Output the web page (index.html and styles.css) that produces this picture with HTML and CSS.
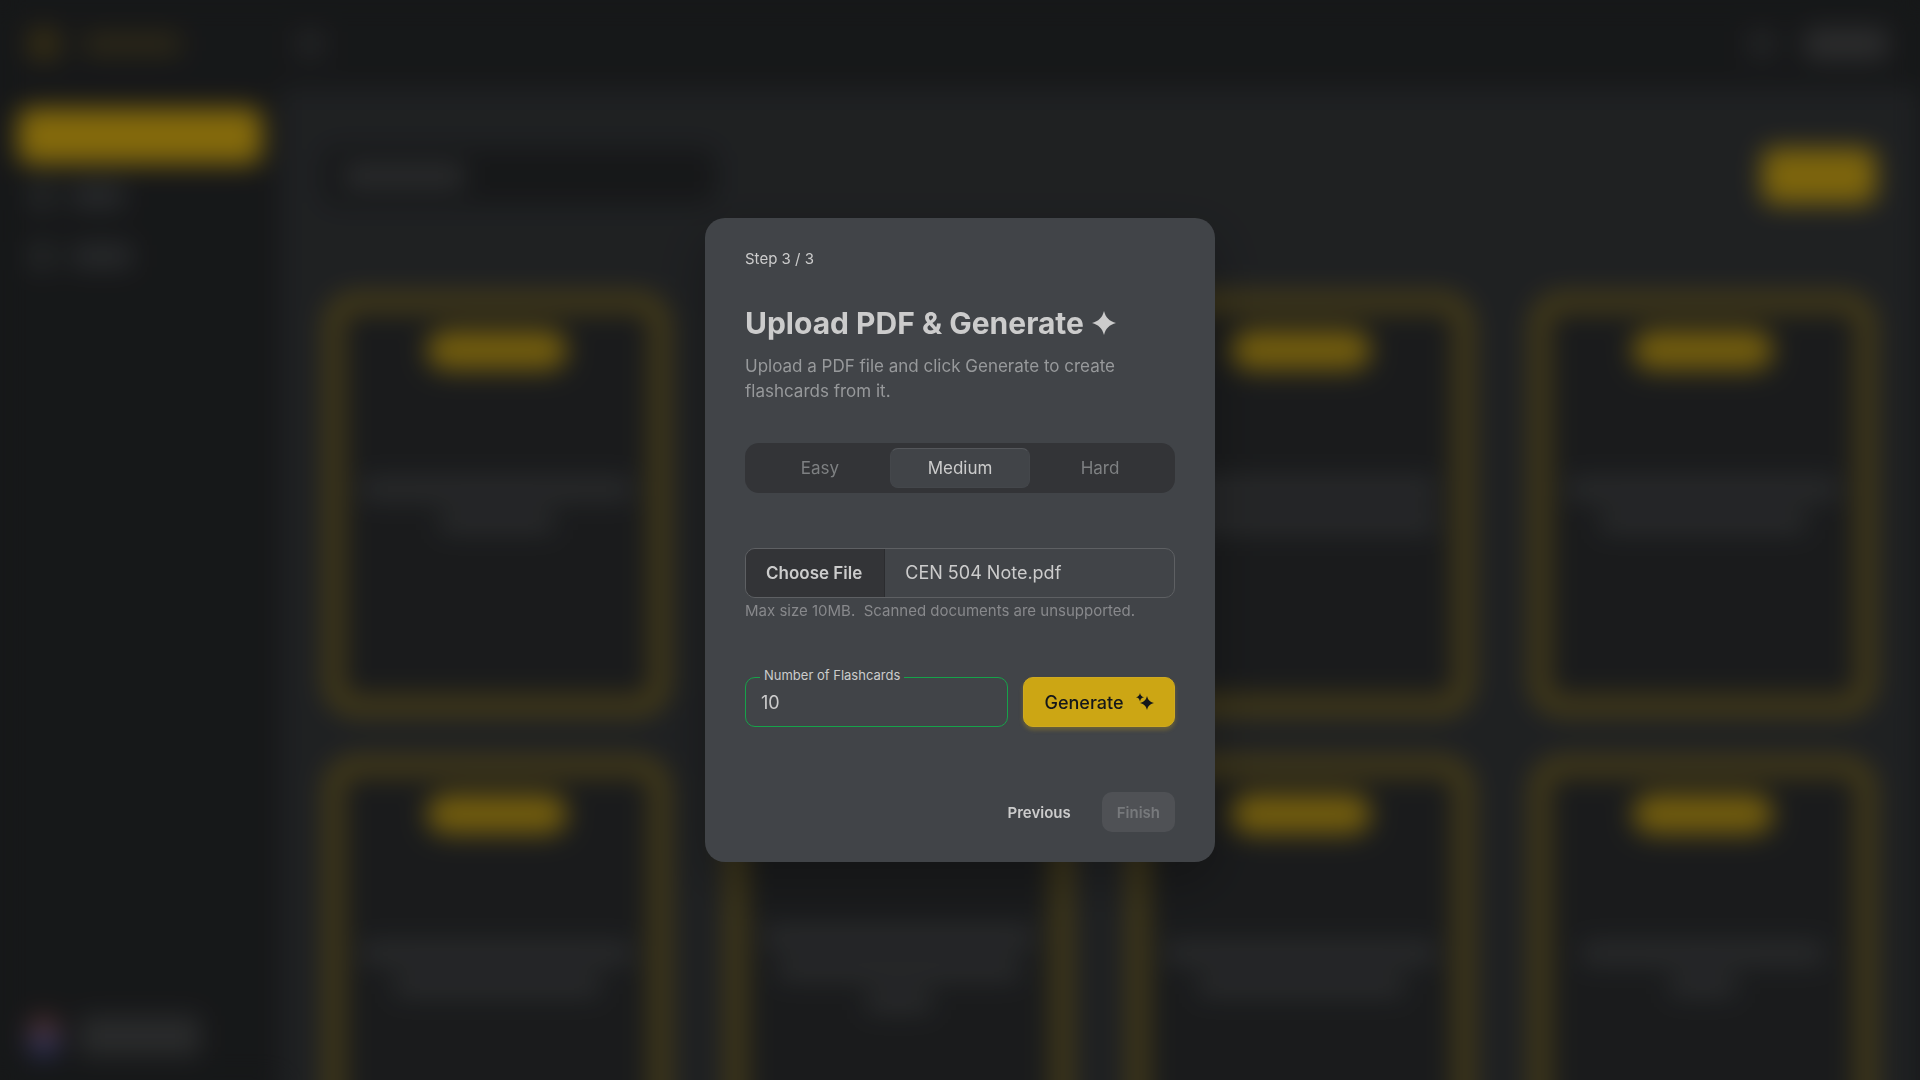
FILE: index.html
```html
<!DOCTYPE html>
<html lang="en">
<head>
  <meta charset="UTF-8">
  <meta name="viewport" content="width=device-width, initial-scale=1.0">
  <title>Upload PDF &amp; Generate</title>
  <link rel="stylesheet" href="styles.css">
</head>
<body>
  <!-- Dashboard skeleton, sits behind the modal -->
  <div class="app" aria-hidden="true">
    <aside class="sidebar">
      <div class="brand">
        <span class="brand-icon"></span>
        <span class="brand-name"></span>
      </div>
      <div class="nav">
        <div class="nav-item active"></div>
        <div class="nav-item"><span class="nav-icon"></span><span class="nav-text"></span></div>
        <div class="nav-item"><span class="nav-icon"></span><span class="nav-text long"></span></div>
      </div>
      <div class="user">
        <span class="avatar"></span>
        <span class="user-text"></span>
      </div>
    </aside>

    <div class="content">
      <div class="topbar">
        <span class="top-icon"></span>
        <span class="top-icon push"></span>
        <span class="top-button"></span>
      </div>
      <div class="main">
        <div class="toolbar">
          <div class="search"><span class="search-text"></span></div>
          <div class="new-button"></div>
        </div>
        <div class="cards">
          <div class="card"><i class="pill"></i><div class="lines"><i class="line full"></i><i class="line short"></i></div></div>
          <div class="card"><i class="pill"></i><div class="lines"><i class="line full"></i><i class="line mid"></i></div></div>
          <div class="card"><i class="pill"></i><div class="lines"><i class="line full"></i><i class="line full"></i></div></div>
          <div class="card"><i class="pill"></i><div class="lines"><i class="line full"></i><i class="line mid"></i></div></div>
          <div class="card"><i class="pill"></i><div class="lines"><i class="line full"></i><i class="line mid"></i></div></div>
          <div class="card"><i class="pill"></i><div class="lines"><i class="line full"></i><i class="line wide"></i><i class="line tiny"></i></div></div>
          <div class="card"><i class="pill"></i><div class="lines"><i class="line full"></i><i class="line mid"></i></div></div>
          <div class="card"><i class="pill"></i><div class="lines"><i class="line wide"></i><i class="line tiny"></i></div></div>
        </div>
      </div>
    </div>
  </div>

  <div class="overlay">
    <form class="modal" role="dialog" aria-modal="true" aria-labelledby="modalTitle">
      <p class="step">Step 3 / 3</p>

      <h1 id="modalTitle" class="title">
        Upload PDF &amp; Generate
        <svg class="title-star" viewBox="0 0 24 24" aria-hidden="true"><path d="M12 0C13.600 6.500 17.500 10.400 24 12C17.500 13.600 13.600 17.500 12 24C10.400 17.500 6.500 13.600 0 12C6.500 10.400 10.400 6.500 12 0Z"/></svg>
      </h1>
      <p class="description">Upload a PDF file and click Generate to create flashcards from it.</p>

      <div class="tabs" role="radiogroup" aria-label="Difficulty">
        <label class="tab"><input type="radio" name="difficulty" value="easy">Easy</label>
        <label class="tab"><input type="radio" name="difficulty" value="medium" checked>Medium</label>
        <label class="tab"><input type="radio" name="difficulty" value="hard">Hard</label>
      </div>

      <input type="file" id="fileInput" class="file-input" accept="application/pdf" aria-label="PDF file" aria-describedby="fileHint">
      <p id="fileHint" class="hint">Max size 10MB. &nbsp;Scanned documents are unsupported.</p>

      <div class="generate-row">
        <div class="field">
          <label for="cardCount">Number of Flashcards</label>
          <input type="text" id="cardCount" inputmode="numeric" value="10">
        </div>
        <button type="button" class="generate">
          Generate
          <svg class="sparkles" viewBox="0 0 18 18" aria-hidden="true"><path d="M11 3C12.200 7.200 13.600 8.700 18 10C13.600 11.300 12.200 12.800 11 17C9.800 12.800 8.400 11.300 4 10C8.400 8.700 9.800 7.200 11 3Z"/><path d="M4 0C4.700 2.700 5.500 3.500 8 4.200C5.500 4.900 4.700 5.700 4 8.400C3.300 5.700 2.500 4.900 0 4.200C2.500 3.500 3.300 2.700 4 0Z"/></svg>
        </button>
      </div>

      <div class="actions">
        <button type="button" class="previous">Previous</button>
        <button type="button" class="finish" disabled>Finish</button>
      </div>
    </form>
  </div>

  <script>
    const fileInput = document.getElementById('fileInput');
    const picked = new DataTransfer();
    picked.items.add(new File(['%PDF'], 'CEN 504 Note.pdf', { type: 'application/pdf' }));
    fileInput.files = picked.files;
  </script>
</body>
</html>
```
FILE: styles.css
```css
* {
  box-sizing: border-box;
}

body {
  height: 100vh;
  margin: 0;
  overflow: hidden;
  font-family: Inter, "Liberation Sans", sans-serif;
  font-size: 17px;
  background: #26282a;
  color: #cccccc;
}

/* Dashboard */
.app {
  display: flex;
  align-items: flex-start;
  filter: blur(13px);
}

.sidebar {
  display: flex;
  flex-direction: column;
  width: 280px;
  height: 100vh;
  flex-shrink: 0;
  padding: 24px 18px;
  background: #26282a;
}

.brand {
  display: flex;
  align-items: center;
  gap: 24px;
  height: 40px;
  padding-left: 10px;
  margin-bottom: 44px;
}

.brand-icon {
  width: 32px;
  height: 32px;
  border-radius: 8px;
  background: #5a4d22;
}

.brand-name {
  width: 96px;
  height: 20px;
  background: #504726;
}

.nav {
  display: flex;
  flex-direction: column;
  gap: 4px;
}

.nav-item {
  display: flex;
  align-items: center;
  gap: 16px;
  height: 56px;
  padding-left: 10px;
  border-radius: 12px;
}

.nav-item.active {
  background: #dcb014;
}

.nav-icon {
  width: 28px;
  height: 28px;
  background: #3c4041;
}

.nav-text {
  width: 52px;
  height: 24px;
  background: #44474a;
}

.nav-text.long {
  width: 60px;
}

.user {
  display: flex;
  align-items: center;
  gap: 20px;
  margin-top: auto;
  padding-left: 10px;
}

.avatar {
  width: 32px;
  height: 40px;
  border-radius: 16px;
  background: linear-gradient(#8a5048 20%, #4c58a8 80%);
}

.user-text {
  width: 120px;
  height: 40px;
  background: #464849;
}

.content {
  flex: 1;
  min-width: 0;
  background: #34373a;
}

.topbar {
  display: flex;
  align-items: center;
  gap: 28px;
  height: 88px;
  padding: 0 32px 0 16px;
  background: #26282a;
}

.top-icon {
  width: 28px;
  height: 28px;
  background: #3a3c3e;
}

.top-icon.push {
  margin-left: auto;
}

.top-button {
  width: 84px;
  height: 32px;
  border-radius: 8px;
  background: #4a4b4c;
}

.main {
  padding: 60px 44px;
}

.toolbar {
  display: flex;
  justify-content: space-between;
  height: 56px;
  margin-bottom: 88px;
}

.search {
  display: flex;
  align-items: center;
  width: 392px;
  padding-left: 20px;
  border-radius: 12px;
  background: #26282a;
}

.search-text {
  width: 120px;
  height: 24px;
  background: #484a4c;
}

.new-button {
  width: 114px;
  border-radius: 12px;
  background: #d0a815;
}

.cards {
  display: grid;
  grid-template-columns: repeat(4, 1fr);
  gap: 40px 56px;
}

.card {
  display: flex;
  flex-direction: column;
  align-items: center;
  height: 424px;
  padding-top: 18px;
  border: 20px solid #746428;
  border-radius: 32px;
  background: #2c2e30;
}

.pill {
  width: 140px;
  height: 40px;
  flex-shrink: 0;
  border-radius: 20px;
  background: #be9a17;
}

.lines {
  display: flex;
  flex: 1;
  flex-direction: column;
  justify-content: center;
  align-items: center;
  gap: 12px;
  width: 100%;
  padding-bottom: 56px;
}

.line {
  height: 20px;
  background: #484a4c;
}

.line.full {
  width: 268px;
}

.line.wide {
  width: 240px;
}

.line.mid {
  width: 204px;
}

.line.short {
  width: 112px;
}

.line.tiny {
  width: 64px;
}

/* Modal */
.overlay {
  position: fixed;
  inset: 0;
  display: flex;
  justify-content: center;
  align-items: center;
  background: rgba(0, 0, 0, 0.4);
}

.modal {
  width: 510px;
  max-width: 100%;
  padding: 30px 40px;
  border-radius: 20px;
  background: #414448;
  box-shadow: 0 20px 50px rgba(0, 0, 0, 0.25);
}

.modal p {
  margin: 0;
}

.modal button,
.modal input {
  font-family: inherit;
}

.modal .step {
  font-size: 15px;
  line-height: 22px;
}

.title {
  display: flex;
  align-items: center;
  gap: 8px;
  margin: 32px 0 10px;
  font-size: 30px;
  line-height: 42px;
  font-weight: 700;
}

.title-star {
  width: 24px;
  height: 24px;
  fill: currentColor;
}

.description {
  color: #97999b;
  line-height: 25px;
}

.tabs {
  display: flex;
  margin-top: 39px;
  padding: 5px;
  border-radius: 14px;
  background: #333437;
}

.tab {
  flex: 1;
  height: 40px;
  border-radius: 8px;
  border: 1px solid transparent;
  color: #7e8082;
  line-height: 38px;
  text-align: center;
  cursor: pointer;
}

.tab input {
  position: absolute;
  opacity: 0;
}

.tab:has(:checked) {
  background: #414448;
  border-color: #44474b;
  border-top-color: #55575b;
  color: #cccccc;
}

.file-input {
  display: block;
  width: 100%;
  height: 50px;
  margin-top: 55px;
  border: 1px solid #5e6063;
  border-radius: 10px;
  overflow: hidden;
  color: #cccccc;
  font-size: 18px;
  line-height: 48px;
}

.file-input::file-selector-button {
  height: 48px;
  margin: 0 20px 0 0;
  padding: 0 22px 0 20px;
  border: 0;
  border-right: 1px solid #2b2c2f;
  background: #333437;
  color: #cccccc;
  font-family: inherit;
  font-size: 17px;
  font-weight: 600;
}

.hint {
  color: #88898c;
  font-size: 15px;
  line-height: 26px;
}

.generate-row {
  display: flex;
  gap: 15px;
  margin-top: 53px;
}

.field {
  position: relative;
  flex: 1;
}

.field label {
  position: absolute;
  top: -12px;
  left: 15px;
  padding: 0 4px;
  background: #414448;
  font-size: 13px;
  line-height: 20px;
}

.field input {
  width: 100%;
  height: 50px;
  padding: 0 15px;
  border: 1px solid #16a34a;
  border-radius: 10px;
  outline: none;
  background: transparent;
  color: #cccccc;
  font-size: 18px;
}

.generate {
  display: flex;
  justify-content: center;
  align-items: center;
  gap: 12px;
  width: 152px;
  height: 50px;
  border: 1px solid #cfaa20;
  border-radius: 10px;
  background: #cca614;
  box-shadow: 0 3px 4px rgba(204, 166, 20, 0.3);
  color: #14171a;
  font-size: 18px;
  font-weight: 500;
}

.sparkles {
  width: 18px;
  height: 18px;
  fill: currentColor;
}

.actions {
  display: flex;
  justify-content: flex-end;
  gap: 16px;
  margin-top: 65px;
}

.actions button {
  height: 40px;
  padding: 0 15px;
  border: 0;
  border-radius: 10px;
  font-size: 15px;
  font-weight: 600;
}

.previous {
  background: transparent;
  color: #cccccc;
}

.finish {
  background: #4f5155;
  color: #77797c;
}
```
